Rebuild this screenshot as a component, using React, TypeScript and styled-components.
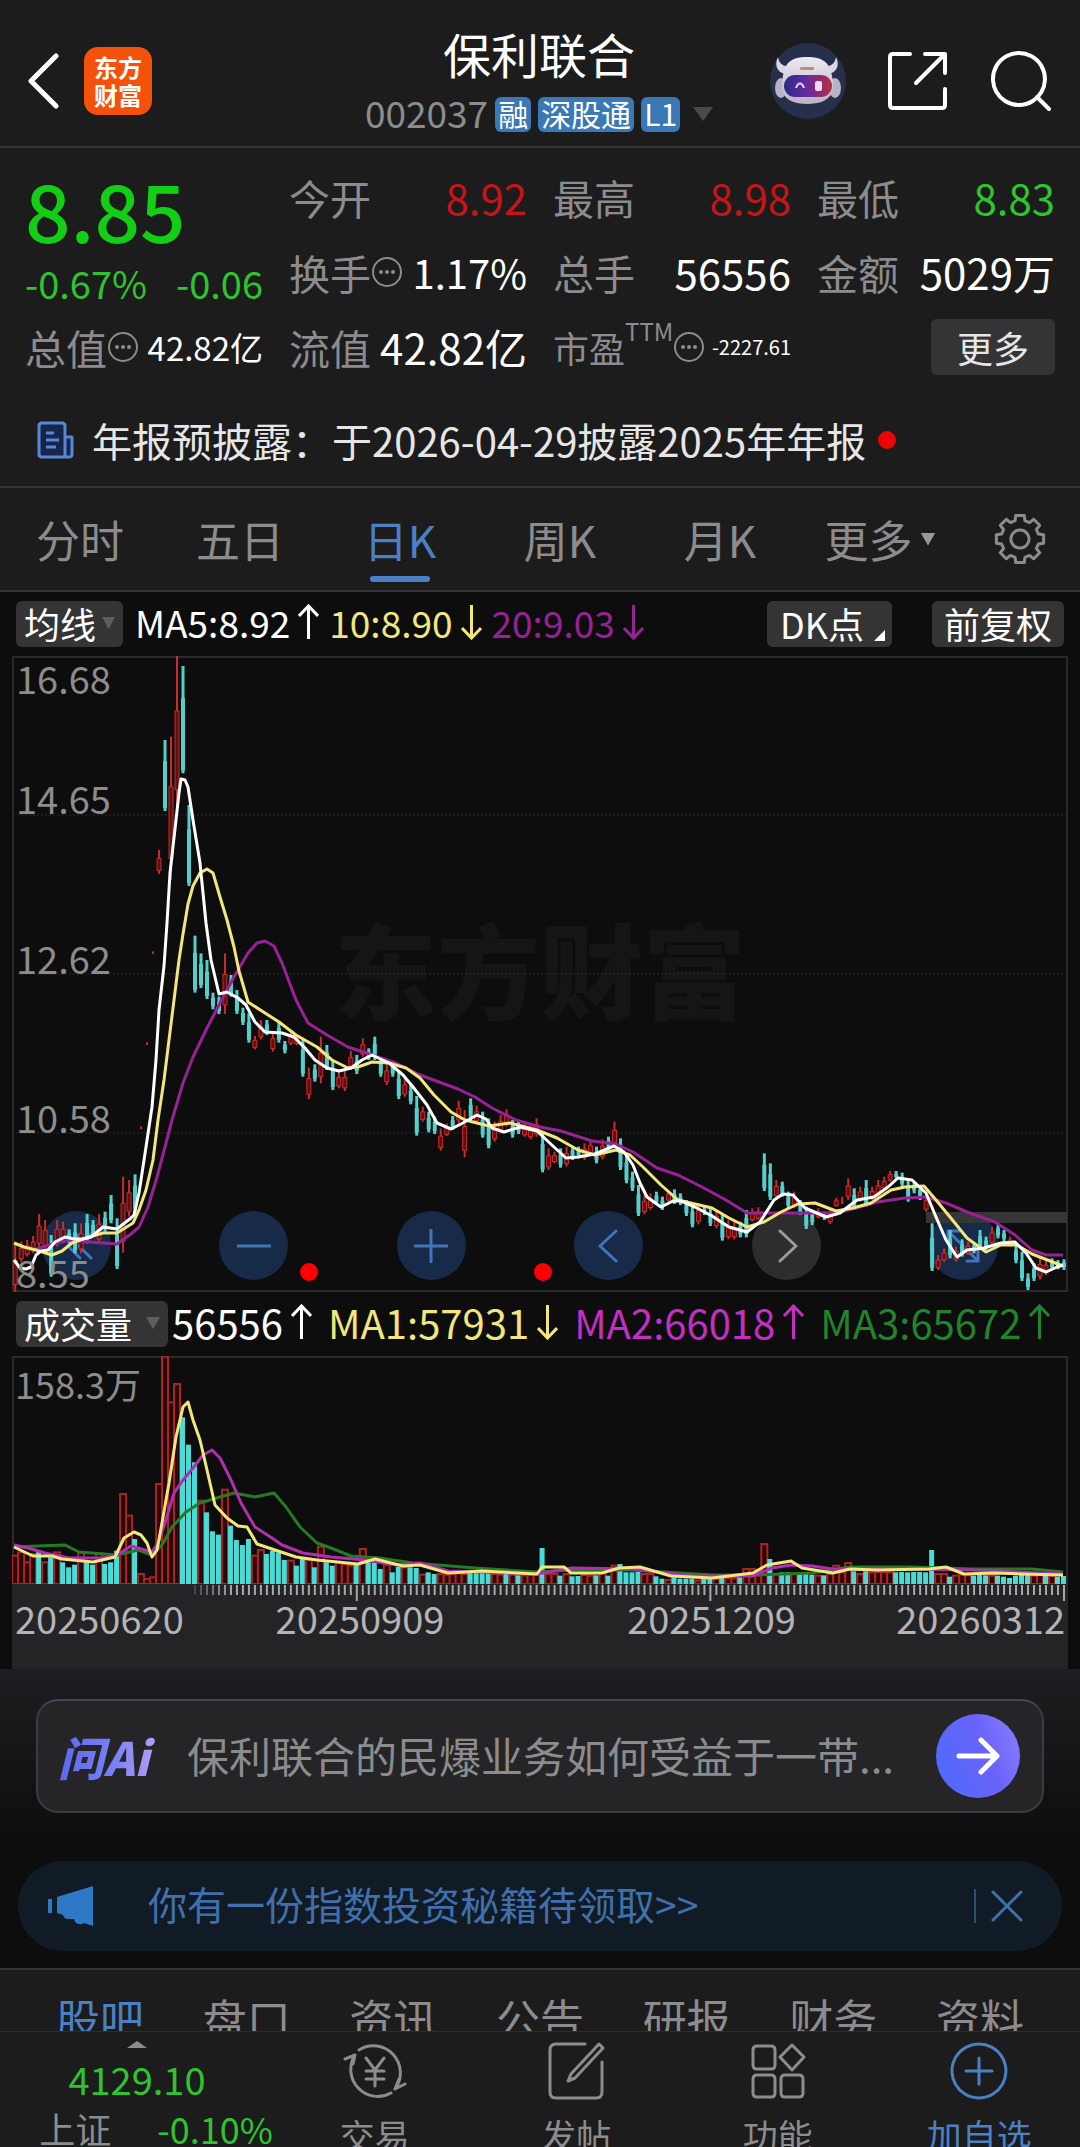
import React from "react";
import styled, { createGlobalStyle } from "styled-components";

const c = {
  panel: "#1c1c1c",
  black: "#0d0d0d",
  line: "#363636",
  grey: "#8c8c8e",
  light: "#e6e6e6",
  white: "#ffffff",
  blue: "#4a80c4",
  red: "#c4151b",
  green: "#2fc42f",
  vivid: "#12cf16",
  yellow: "#f3e67c",
  purple: "#962296",
  magenta: "#c22fc2",
  forest: "#23832a",
  cyan: "#54cfcb",
  chip: "#343434",
};

const Global = createGlobalStyle`
  *, *::before, *::after { box-sizing: border-box; }
  body { margin: 0; background: ${c.black}; }
  button { font: inherit; color: inherit; border: 0; padding: 0; background: none; cursor: pointer; }
  a { color: inherit; text-decoration: none; }
  svg { display: block; }
`;

const App_ = styled.div`
  display: flex;
  flex-direction: column;
  height: 100vh;
  overflow: hidden;
  background: ${c.black};
  color: ${c.white};
  font-family: "Noto Sans CJK SC", "Noto Sans", sans-serif;
`;

const Scroll = styled.main`
  flex: 1;
  min-height: 0;
  overflow: hidden;
`;

/* ---------- header ---------- */

const Header = styled.header`
  display: grid;
  grid-template-columns: 1fr auto 1fr;
  height: 148px;
  padding: 0 28px 0 26px;
  background: ${c.panel};
  border-bottom: 2px solid ${c.line};
`;

const HeaderSide = styled.div<{ $end?: boolean }>`
  display: flex;
  align-items: center;
  justify-content: ${(p) => (p.$end ? "flex-end" : "flex-start")};
  gap: ${(p) => (p.$end ? 42 : 24)}px;
  padding-top: 16px;
`;

const Logo = styled.div`
  display: grid;
  place-content: center;
  width: 68px;
  height: 68px;
  border-radius: 14px;
  background: #f4510d;
  font-size: 24px;
  font-weight: 700;
  line-height: 28px;
  text-align: center;
`;

const TitleBox = styled.div`
  display: flex;
  flex-direction: column;
  align-items: center;
  padding-top: 21px;
`;

const Title = styled.h1`
  margin: 0;
  font-size: 48px;
  font-weight: 400;
  line-height: 64px;
`;

const CodeRow = styled.div`
  display: flex;
  align-items: center;
  gap: 7px;
  height: 58px;
  color: ${c.grey};
  font-size: 37px;
  line-height: 54px;
  & > i { margin-left: 6px; }
  & > span:first-child { padding-bottom: 4px; }
`;

const Tag = styled.span`
  height: 35px;
  padding: 0 3px;
  border-radius: 6px;
  background: #3a78b6;
  color: ${c.white};
  font-size: 30px;
  line-height: 33px;
`;

const Caret = styled.i<{ $w: number; $h: number; $color?: string; $up?: boolean }>`
  display: inline-block;
  width: ${(p) => p.$w}px;
  height: ${(p) => p.$h}px;
  background: ${(p) => p.$color || "#5e5e5e"};
  clip-path: ${(p) => (p.$up ? "polygon(50% 0, 100% 100%, 0 100%)" : "polygon(0 0, 100% 0, 50% 100%)")};
`;

/* ---------- quote ---------- */

const Quote = styled.section`
  display: grid;
  grid-template-columns: repeat(4, 1fr);
  grid-auto-rows: 75px;
  column-gap: 26px;
  padding: 11px 25px 2px;
  background: ${c.panel};
`;

const PriceBlock = styled.div`
  grid-row: span 2;
  color: ${c.vivid};
`;

const Price = styled.div`
  font-size: 80px;
  font-weight: 500;
  line-height: 98px;
`;

const Change = styled.div`
  display: flex;
  justify-content: space-between;
  color: ${c.green};
  font-size: 38px;
  line-height: 52px;
  white-space: nowrap;
`;

const Cell = styled.div`
  display: flex;
  align-items: center;
  min-width: 0;
  white-space: nowrap;
`;

const Label = styled.span<{ $small?: boolean }>`
  display: flex;
  align-items: center;
  color: ${c.grey};
  font-size: ${(p) => (p.$small ? 36 : 41)}px;
  line-height: 60px;
`;

const Sup = styled.sup`
  align-self: flex-start;
  font-size: 24px;
  line-height: 28px;
`;

const Value = styled.span<{ $color?: string; $size?: number }>`
  margin-left: auto;
  color: ${(p) => p.$color || c.white};
  font-size: ${(p) => p.$size || 42}px;
  line-height: 60px;
`;

const MoreButton = styled.button`
  width: 124px;
  height: 56px;
  margin-left: auto;
  border-radius: 6px;
  background: ${c.chip};
  color: ${c.light};
  font-size: 36px;
  line-height: 54px;
`;

const Notice = styled.a`
  display: flex;
  align-items: center;
  height: 102px;
  padding: 8px 37px 0;
  background: ${c.panel};
  border-bottom: 2px solid ${c.line};
  color: ${c.light};
  font-size: 40px;
  line-height: 60px;
  white-space: nowrap;
`;

const NoticeText = styled.span`
  margin: 0 12px 0 17px;
`;

const Dot = styled.i`
  width: 18px;
  height: 18px;
  border-radius: 50%;
  background: #ec0505;
`;

/* ---------- period tabs ---------- */

const Periods = styled.nav`
  display: grid;
  grid-template-columns: repeat(6, 4fr) 3fr;
  align-items: center;
  justify-items: center;
  height: 104px;
  background: ${c.panel};
  border-bottom: 2px solid ${c.line};
  color: ${c.grey};
  font-size: 44px;
  line-height: 64px;
`;

const Period = styled.button<{ $on?: boolean }>`
  position: relative;
  display: flex;
  align-items: center;
  gap: 8px;
  height: 100%;
  white-space: nowrap;
  color: ${(p) => (p.$on ? c.blue : c.grey)};
  &::after {
    content: "";
    display: ${(p) => (p.$on ? "block" : "none")};
    position: absolute;
    left: calc(50% - 30px);
    bottom: 8px;
    width: 60px;
    height: 6px;
    border-radius: 3px;
    background: ${c.blue};
  }
`;

/* ---------- indicators ---------- */

const Indicators = styled.div<{ $size: number }>`
  display: flex;
  align-items: center;
  height: 64px;
  padding: 0 16px;
  font-size: ${(p) => p.$size}px;
  line-height: 54px;
  white-space: nowrap;
`;

const Chip = styled.button<{ $gap?: number; $pad?: number }>`
  display: flex;
  align-items: center;
  gap: ${(p) => p.$gap || 6}px;
  height: 46px;
  padding: 0 ${(p) => p.$pad || 8}px 2px;
  border-radius: 6px;
  background: ${c.chip};
  font-size: 36px;
  line-height: 44px;
`;

const Corner = styled.i`
  align-self: flex-end;
  width: 11px;
  height: 11px;
  margin: 0 -6px 4px 0;
  background: ${c.white};
  clip-path: polygon(100% 0, 100% 100%, 0 100%);
`;

const Reading = styled.span<{ $color: string; $left: number }>`
  display: flex;
  align-items: center;
  gap: 8px;
  margin-left: ${(p) => p.$left}px;
  padding-bottom: 4px;
  color: ${(p) => p.$color};
`;

const Right = styled.div`
  display: flex;
  gap: 40px;
  margin-left: auto;
`;

/* ---------- charts ---------- */

const ChartBox = styled.div`
  position: relative;
  margin: 0 12px;
  & > svg {
    position: relative;
    width: 100%;
    height: auto;
    pointer-events: none;
  }
`;

const Controls = styled.div`
  position: absolute;
  left: 30px;
  right: 70px;
  bottom: 12px;
  display: flex;
  justify-content: space-between;
`;

const Round = styled.button<{ $off?: boolean }>`
  display: grid;
  place-items: center;
  width: 69px;
  height: 69px;
  border-radius: 50%;
  background: ${(p) => (p.$off ? "#2d2d2d" : "#172b48")};
  color: ${(p) => (p.$off ? "#9a9a9a" : "#4374ba")};
`;

const Axis = styled.div`
  height: 85px;
  margin: 0 12px;
  background: #242426;
  & > svg { width: 100%; height: auto; }
`;

const Dates = styled.div`
  display: grid;
  grid-template-columns: 166fr 356fr 354fr 180fr;
  padding: 0 3px;
  color: #b4b4b6;
  font-size: 38px;
  line-height: 32px;
  text-align: center;
  white-space: nowrap;
  & > span:first-child { text-align: left; }
  & > span:last-child { text-align: right; }
`;

/* ---------- ask card & banner ---------- */

const AskArea = styled.section`
  padding: 30px 36px 48px;
  background: linear-gradient(#1e1e22, ${c.black} 90%);
`;

const Ask = styled.a`
  display: flex;
  align-items: center;
  height: 114px;
  padding: 0 22px 0 20px;
  border: 2px solid #3c3c44;
  border-top-color: #45435c;
  border-radius: 22px;
  background: #252527;
  color: ${c.grey};
  font-size: 42px;
  line-height: 60px;
  white-space: nowrap;
`;

const AskLogo = styled.span`
  width: 106px;
  background: linear-gradient(90deg, #5b67ee, #7b82f4 55%, #c3a4f5);
  background-clip: text;
  -webkit-background-clip: text;
  color: transparent;
  font-size: 46px;
  font-style: italic;
  font-weight: 900;
`;

const AskText = styled.span`
  flex: 1;
  margin-left: 23px;
  padding-bottom: 2px;
`;

const Go = styled.span`
  display: grid;
  place-items: center;
  width: 84px;
  height: 84px;
  border-radius: 50%;
  background: linear-gradient(70deg, #4a6cfa, #6a63fb 60%, #8d80fa);
`;

const Banner = styled.div`
  display: flex;
  align-items: center;
  height: 90px;
  margin: 0 18px 17px;
  padding: 0 38px 0 30px;
  border-radius: 45px;
  background: #111b25;
  color: #3f70ac;
  font-size: 39px;
  line-height: 56px;
`;

const BannerLink = styled.a`
  flex: 1;
  margin-left: 54px;
  padding-bottom: 6px;
`;

const Close = styled.button`
  padding-left: 14px;
  border-left: 2px solid #2c5076;
`;

/* ---------- bottom ---------- */

const Sections = styled.nav`
  display: flex;
  justify-content: space-between;
  height: 100px;
  padding: 16px 56px 0;
  background: ${c.panel};
  border-top: 2px solid ${c.line};
  font-size: 44px;
  line-height: 64px;
`;

const SectionTab = styled.button<{ $on?: boolean }>`
  align-self: flex-start;
  color: ${(p) => (p.$on ? c.blue : c.grey)};
`;

const Footer = styled.footer`
  flex: none;
  display: grid;
  grid-template-columns: 274px repeat(4, 1fr);
  height: 116px;
  overflow: hidden;
  background: ${c.panel};
  border-top: 1px solid #2c2c2c;
`;

const Index = styled.div`
  display: flex;
  flex-direction: column;
  align-items: center;
  padding-top: 9px;
  color: ${c.green};
  font-size: 38px;
  line-height: 50px;
  & > i { flex: none; }
`;

const IndexValue = styled.span`
  margin-top: 6px;
`;

const IndexRow = styled.div`
  display: flex;
  gap: 46px;
  margin-left: 38px;
  font-size: 36px;
  line-height: 48px;
  white-space: nowrap;
  & > span:first-child { color: ${c.grey}; }
`;

const Action = styled.button<{ $on?: boolean }>`
  display: flex;
  flex-direction: column;
  align-items: center;
  gap: 10px;
  height: 160px;
  padding-top: 10px;
  color: ${(p) => (p.$on ? c.blue : c.grey)};
  font-size: 35px;
  line-height: 50px;
`;

/* ---------- data ---------- */

type Day = { x: number; up: boolean; top: number; bottom: number };

const PITCH = 5.993;
const xOf = (i: number) => 3.2 + PITCH * i;

/* Each day is r(ise) or c(fall) with the high and low, in thirds of a chart unit from the base. */
const parse = (start: number, base: number, text: string): Day[] =>
  text
    .trim()
    .split(/\s+/)
    .map((t, k) => {
      const [a, b] = t.slice(1).split("/").map(Number);
      return { x: xOf(start + k), up: t[0] === "r", top: base + a / 3, bottom: base + b / 3 };
    });

const days: Day[] = [
  ...parse(
    0,
    304,
    `r850/995 r845/905 r840/890 r828/880 r762/865 r780/870 c825/950 r780/860 r785/850 c808/850
     c790/880 r790/880 c762/850 c780/830 r762/850 c755/815 c705/790 c775/927 r650/878 r660/770
     c643/755 r499/507 r247/255 r-26/-18 r-330/-258 c-660/-447 r-670/-240 r-913/-440 c-882/-560 c-465/-222
     c-73/98 c-20/84 c0/117 c98/148 c110/162 r-20/162 c45/110 c90/162 c143/195 c160/248
     r228/268 r180/238 c180/225 r215/275 c185/248 c243/280 r215/255 r225/255 c235/350 r323/417
     c313/365 r230/370 c255/330 c300/390 r335/385 r330/393 r273/330 c285/342 r235/290 c265/300
     c230/300 c295/350 r310/375 c305/350 c330/417 r355/410 c375/433 c408/527 r440/485 c455/517
     c470/522 r505/572 r490/528 c468/510 r422/490 r450/592 c415/480 r437/490 c455/533 c475/565
     r485/545 r465/520 r448/500 c480/533 c485/522 r490/530 r490/537 r475/530`
  ),
  ...parse(
    88,
    344,
    `c395/517 r445/510 r455/490 c445/503 r440/500 c440/480 c440/475 r430/480 r422/465 c440/490
     r418/478 c410/450 r365/440 c415/510 c460/550 c515/573 c555/648 r585/643 r580/630 c575/615
     c590/630 r570/605 c568/612 c580/615 c600/648 c615/682 r610/673 c620/645 c625/678 r630/685
     c645/722 r660/718 r665/718 c665/712 c630/712 r625/665 r622/660 c460/573 c490/600 r540/595
     c545/590 c575/625 r575/625 c600/645 c620/687 c630/675 r625/655 c635/660 r625/672 r593/620
     r590/612 r535/600 c565/630 r560/605 c540/620 r560/600 r540/590 r530/570 r513/545 c513/540
     c518/560 c535/605 c545/580 c555/600 r585/635 c670/813 r765/810 r745/785 c690/775 r740/785
     c718/770 r725/765 c730/760 c690/750 c710/750 r680/735 c672/715 c690/725 r710/740 c735/790
     c755/843 c820/870 c790/843 r770/838 r780/825 c775/810 c780/808 c778/810`
  ),
];

/* Volume per day, as bar height in thirds of a chart unit. */
const volumes = `r85 r95 r65 r90 c100 r65 c80 r95 c65 c50 c58 r95 c65 c58 r92 c60 c65 c100 r270 r205
  c135 r30 r15 r20 r300 r682 r545 r600 c500 c418 c365 r250 c215 c158 c148 r283 c175 c132 c117 c135
  r85 r102 c90 c100 c95 c72 r70 c55 c80 r72 c50 r112 c65 c55 r65 r60 r55 c60 r105 c65
  c65 c45 r58 c35 c52 r50 c50 c48 r28 c35 c30 r30 r28 r30 r32 r30 c35 c35 c35 c35
  r30 r28 c30 r28 c26 r26 r27 r28 c108 r30 r30 c25 r30 c23 c24 r27 r25 c26 r45 c25
  r55 c60 c35 c35 c36 r30 r30 c23 c16 r12 c20 c16 c16 c16 r10 c18 c18 r15 c18 r18
  r18 c20 r45 r45 r25 r120 c75 r30 c35 c35 r30 c30 c30 c28 r25 c26 r30 r55 r35 r63
  c38 r30 c38 r35 r36 r35 r35 c35 c36 c35 c36 c36 c35 c102 r30 r30 c22 r25 r28 r26
  c25 c27 c26 r25 c25 c22 c18 c25 c28 c28 r25 r26 c27 r24 c22 c24`
  .trim()
  .split(/\s+/)
  .map((t, i) => ({ x: xOf(i), up: t[0] === "r", h: Number(t.slice(1)) / 3 }));

const ma5 =
  "2,604 8,612 14,613 19,611 24,599 29,595 36,594 43,586 53,581 62,583 70,583 79,581 91,571 105,573 119,562 122,559 127,537 134,491 140,451 144,404 147,354 152,310 155,267 158,217 164,164 167,137 169,123 173,124 176,131 181,164 188,207 194,267 199,304 207,338 215,336 226,342 234,349 243,366 253,376 270,377 282,381 293,392 303,404 315,412 327,415 339,412 350,404 360,399 377,407 391,419 401,431 415,449 425,467 439,473 449,468 465,459 474,463 480,472 492,476 508,471 525,475 542,491 554,502 566,501 583,498 602,490 612,496 621,509 628,527 635,541 649,551 661,545 669,545 683,551 700,560 717,571 735,576 748,566 762,544 771,538 781,539 793,552 814,561 828,557 845,544 862,541 876,531 886,522 900,524 914,537 924,561 934,584 945,601 955,594 972,592 989,587 1003,586 1014,597 1024,612 1034,616 1045,611 1051,609";
const ma10 =
  "2,587 12,591 24,594 40,599 50,595 60,587 74,582 91,577 105,577 121,567 127,554 134,534 141,504 146,464 152,424 157,384 162,344 167,304 171,278 176,248 181,230 188,217 195,213 201,217 208,241 215,264 222,291 227,315 236,346 253,357 267,366 284,379 305,391 320,404 336,412 346,411 360,406 377,407 394,412 408,422 422,439 439,456 453,464 477,470 498,467 525,474 545,482 566,494 583,499 604,494 618,499 631,511 649,529 666,544 683,548 700,552 717,562 735,571 752,566 769,556 786,548 803,547 824,555 841,552 859,547 879,534 893,531 912,530 924,544 938,561 955,582 974,596 989,589 1005,589 1020,598 1051,610";
const ma20 =
  "22,594 33,590 57,584 78,586 105,588 119,578 127,571 136,551 145,521 153,491 160,464 171,427 181,401 195,372 208,347 222,321 236,297 245,287 253,285 262,290 270,307 284,344 296,367 315,379 336,391 360,399 384,407 408,419 446,433 463,441 480,452 504,464 528,471 549,475 580,485 604,488 621,496 645,512 666,519 690,531 714,544 735,557 755,557 793,557 824,557 848,551 865,546 893,542 914,541 934,547 955,556 983,566 1003,579 1020,594 1034,599 1051,599";
const vol5 =
  "2,191 21,200 40,200 50,203 81,206 103,201 112,182 122,176 129,179 135,187 140,201 145,194 150,167 157,127 164,81 171,51 176,46 181,64 188,84 195,114 203,149 215,162 226,170 235,171 245,188 263,194 284,201 305,204 346,208 363,203 391,210 408,209 436,217 470,215 525,218 530,211 552,211 559,217 590,217 607,212 628,211 659,220 700,222 741,217 755,209 779,205 790,212 821,217 838,213 865,214 917,213 934,211 952,218 983,217 1010,218 1051,219";
const vol10 =
  "2,189 16,192 33,197 57,202 91,202 105,199 119,190 140,196 146,187 153,167 162,137 171,124 181,112 191,99 200,94 208,102 219,124 229,147 243,171 260,182 270,189 291,197 319,201 353,204 384,209 408,207 436,215 525,218 560,212 620,213 680,220 740,220 760,212 779,209 800,210 820,213 900,213 960,214 1051,218";
const vol20 =
  "2,191 26,190 53,189 67,196 105,199 126,194 140,199 150,189 160,171 174,156 188,147 208,141 222,137 243,141 262,137 274,151 288,171 305,187 319,192 339,200 367,202 401,207 463,212 525,216 560,214 620,214 700,219 740,219 800,217 838,211 900,211 960,213 1020,213 1051,216";

/* ---------- drawings ---------- */

const Stroke = ({ w, h = w, d, sw = 3, vb }: { w: number; h?: number; d: string; sw?: number; vb?: string }) => (
  <svg width={w} height={h} viewBox={vb || `0 0 ${w} ${h}`} fill="none" stroke="currentColor" strokeWidth={sw} strokeLinecap="round" strokeLinejoin="round">
    <path d={d} />
  </svg>
);

const Arrow = ({ down }: { down?: boolean }) => (
  <svg width="21" height="36" viewBox="0 0 21 36" fill="none" stroke="currentColor" strokeWidth="3" role="img" aria-label={down ? "down" : "up"}>
    <path d={down ? "M10.5 1V34M1 24L10.5 34L20 24" : "M10.5 35V2M1 12L10.5 2L20 12"} />
  </svg>
);

const More = () => (
  <svg width="32" height="32" viewBox="0 0 32 32" fill="none" stroke={c.grey} strokeWidth="2">
    <circle cx="16" cy="16" r="14" />
    <g fill={c.grey} stroke="none">
      <circle cx="10" cy="16" r="2" />
      <circle cx="16" cy="16" r="2" />
      <circle cx="22" cy="16" r="2" />
    </g>
  </svg>
);

const Robot = () => (
  <svg width="76" height="76" viewBox="0 0 76 76">
    <defs>
      <linearGradient id="visor">
        <stop offset="0" stopColor="#2b2a8c" />
        <stop offset=".5" stopColor="#6a2a9c" />
        <stop offset="1" stopColor="#b5303f" />
      </linearGradient>
      <linearGradient id="shell" x2="0" y2="1">
        <stop offset="0" stopColor="#eceaf0" />
        <stop offset="1" stopColor="#b9b2c4" />
      </linearGradient>
    </defs>
    <circle cx="38" cy="38" r="38" fill="#26304a" />
    <path d="M8 14C4 22 7 29 15 31L21 22C13 25 9 20 8 14ZM66 14C70 22 67 29 59 31L53 22C61 25 65 20 66 14Z" fill="#d9d7e2" />
    <ellipse cx="11" cy="45" rx="6" ry="10" fill="#b8b3c6" />
    <ellipse cx="65" cy="45" rx="6" ry="10" fill="#b8b3c6" />
    <path d="M37 14C52 14 60 19 62 33C65 46 64 61 37 61C12 61 10 47 13 33C15 19 22 14 37 14Z" fill="url(#shell)" />
    <rect x="14" y="32" width="48" height="22" rx="11" fill="url(#visor)" />
    <path d="M26 45C28 39 32 39 34 45" fill="none" stroke="#d9d7ff" strokeWidth="2" />
    <rect x="45" y="38" width="7" height="10" rx="2" fill="#eadcf0" />
    <rect x="30" y="24" width="14" height="3" rx="1" fill="#b98d80" />
  </svg>
);

const gear = (() => {
  const pts: string[] = [];
  for (let k = 0; k < 8; k++) {
    const a = (k * Math.PI) / 4 - Math.PI / 2;
    [
      [-0.26, 19],
      [-0.18, 24],
      [0.18, 24],
      [0.26, 19],
    ].forEach(([da, r]) => pts.push(`${(26 + r * Math.cos(a + da)).toFixed(1)} ${(26 + r * Math.sin(a + da)).toFixed(1)}`));
  }
  return `M${pts.join("L")}Z`;
})();

const Line = ({ points, color, w = 3 }: { points: string; color: string; w?: number }) => (
  <polyline points={points} fill="none" stroke={color} strokeWidth={w} strokeLinejoin="round" />
);

const PriceChart = () => (
  <svg viewBox="0 0 1056 636" fontSize="38" fill={c.grey} role="img" aria-label="日K">
    <text x="528" y="356" fontSize="103" fontWeight="900" fill="#151515" textAnchor="middle">东方财富</text>
    <rect x="1" y="1" width="1054" height="634" fill="none" stroke="#2a2a2a" strokeWidth="2" />
    {[159, 318, 477].map((y) => (
      <path key={y} d={`M1 ${y}H1055`} stroke="#2c2c2c" strokeDasharray="2 2" />
    ))}
    <rect x="914" y="556" width="141" height="11" fill="#363636" />
    {days.map((d, i) => (
      <g key={i} stroke={d.up ? "#cc2a2c" : c.cyan}>
        <path d={`M${d.x} ${d.top}V${d.bottom}`} strokeWidth={d.up ? 2 : 3} />
        {d.up && d.bottom - d.top > 8 && (
          <rect x={d.x - 2} y={d.top + (d.bottom - d.top) * 0.35} width="4" height={(d.bottom - d.top) * 0.5} fill="#5a1214" strokeWidth="1" />
        )}
        {!d.up && <path d={`M${d.x} ${d.top + (d.bottom - d.top) * 0.3}V${d.bottom - 3}`} strokeWidth="4" />}
      </g>
    ))}
    <Line points={ma20} color={c.purple} />
    <Line points={ma10} color={c.yellow} />
    <Line points={ma5} color={c.white} />
    <text x="4" y="38">16.68</text>
    <text x="4" y="158">14.65</text>
    <text x="4" y="318">12.62</text>
    <text x="4" y="477">10.58</text>
    <text x="4" y="632">8.55</text>
    <circle cx="297" cy="616" r="9" fill="#f00" />
    <circle cx="531" cy="616" r="9" fill="#f00" />
  </svg>
);

const VolumeChart = () => (
  <svg viewBox="0 0 1056 228" fontSize="36" fill={c.grey} role="img" aria-label="成交量">
    <rect x="1" y="1" width="1054" height="227" fill="none" stroke="#2a2a2a" strokeWidth="2" />
    {volumes.map((v, i) =>
      v.up ? (
        <rect key={i} x={v.x - 3} y={228 - v.h} width="6" height={v.h} fill="#2a0808" stroke="#ab2426" strokeWidth="2" />
      ) : (
        <rect key={i} x={v.x - 3} y={228 - v.h} width="5" height={v.h} fill="#49dcd6" />
      )
    )}
    <Line points={vol20} color="#257a25" />
    <Line points={vol10} color="#b02fb0" />
    <Line points={vol5} color={c.yellow} />
    <text x="3" y="43">158.3万</text>
  </svg>
);

const Ticks = () => (
  <svg viewBox="0 0 1056 18" stroke="#a8a8a8" strokeWidth="2">
    {Array.from({ length: 146 }, (_, k) => {
      const i = k + 30;
      const major = i === 57 || i === 116 || i === 175;
      return <path key={i} opacity={Math.min(1, (k + 2) / 8)} d={`M${xOf(i)} 1V${major ? 17 : 11}`} />;
    })}
  </svg>
);

/* ---------- page ---------- */

export default function App() {
  return (
    <App_>
      <Global />
      <Scroll>
        <Header>
          <HeaderSide>
            <button aria-label="返回">
              <Stroke w={34} h={56} sw={5} d="M30 3L5 28L30 53" />
            </button>
            <Logo>东方<br />财富</Logo>
          </HeaderSide>
          <TitleBox>
            <Title>保利联合</Title>
            <CodeRow>
              <span>002037</span>
              <Tag>融</Tag>
              <Tag>深股通</Tag>
              <Tag>L1</Tag>
              <Caret $w={20} $h={14} $color="#4a4a4a" />
            </CodeRow>
          </TitleBox>
          <HeaderSide $end>
            <button aria-label="助手"><Robot /></button>
            <button aria-label="分享">
              <Stroke w={60} sw={4} d="M22 3H5Q2 3 2 6V54Q2 57 5 57H54Q57 57 57 54V38M37 3H57V22M56 4L28 32" />
            </button>
            <button aria-label="搜索">
              <Stroke w={62} sw={4} d="M29 3A26 26 0 1 1 28.900 3ZM47 47L59 59" />
            </button>
          </HeaderSide>
        </Header>

        <Quote>
          <PriceBlock>
            <Price>8.85</Price>
            <Change><span>-0.67%</span><span>-0.06</span></Change>
          </PriceBlock>
          <Cell><Label>今开</Label><Value $color={c.red}>8.92</Value></Cell>
          <Cell><Label>最高</Label><Value $color={c.red}>8.98</Value></Cell>
          <Cell><Label>最低</Label><Value $color={c.green}>8.83</Value></Cell>
          <Cell><Label>换手<More /></Label><Value $size={40}>1.17%</Value></Cell>
          <Cell><Label>总手</Label><Value>56556</Value></Cell>
          <Cell><Label>金额</Label><Value>5029万</Value></Cell>
          <Cell><Label>总值<More /></Label><Value $size={33}>42.82亿</Value></Cell>
          <Cell><Label>流值</Label><Value>42.82亿</Value></Cell>
          <Cell><Label $small>市盈<Sup>TTM</Sup><More /></Label><Value $size={20}>-2227.61</Value></Cell>
          <Cell><MoreButton>更多</MoreButton></Cell>
        </Quote>

        <Notice href="#notice">
          <svg width="38" height="38" viewBox="0 0 38 38" fill="#16264a" stroke="#5a86d6" strokeWidth="3" strokeLinejoin="round">
            <path d="M28 36H5Q2 36 2 33V5Q2 2 5 2H25Q28 2 28 5V36ZM28 16H35V33Q35 36 32 36H28" />
            <path d="M9 12H17M9 19H22M9 26H19" />
          </svg>
          <NoticeText>年报预披露：于2026-04-29披露2025年年报</NoticeText>
          <Dot />
        </Notice>

        <Periods>
          <Period>分时</Period>
          <Period>五日</Period>
          <Period $on>日K</Period>
          <Period>周K</Period>
          <Period>月K</Period>
          <Period>更多<Caret $w={15} $h={13} $color="#98989a" /></Period>
          <button aria-label="设置">
            <Stroke w={52} sw={3} d={`${gear}M26 17A9 9 0 1 1 25.900 17Z`} />
          </button>
        </Periods>

        <Indicators $size={37}>
          <Chip>均线<Caret $w={13} $h={12} /></Chip>
          <Reading $color={c.white} $left={12}>MA5:8.92<Arrow /></Reading>
          <Reading $color={c.yellow} $left={10}>10:8.90<Arrow down /></Reading>
          <Reading $color={c.purple} $left={10}>20:9.03<Arrow down /></Reading>
          <Right>
            <Chip $pad={13} $gap={10}>DK点<Corner /></Chip>
            <Chip $pad={12}>前复权</Chip>
          </Right>
        </Indicators>

        <ChartBox>
          <Controls>
            <Round aria-label="最早"><Stroke w={34} d="M20 5L8 17L20 29M31 5L19 17L31 29" /></Round>
            <Round aria-label="缩小"><Stroke w={34} d="M1 17H33" /></Round>
            <Round aria-label="放大"><Stroke w={34} d="M1 17H33M17 1V33" /></Round>
            <Round aria-label="向左"><Stroke w={34} d="M24 2L8 17L24 32" /></Round>
            <Round aria-label="向右" $off><Stroke w={34} d="M11 2L27 17L11 32" /></Round>
            <Round aria-label="全屏"><Stroke w={34} d="M2 13V2H13M2 2L14 14M32 21V32H21M32 32L20 20" /></Round>
          </Controls>
          <PriceChart />
        </ChartBox>

        <Indicators $size={40}>
          <Chip $gap={14}>成交量<Caret $w={14} $h={12} /></Chip>
          <Reading $color={c.white} $left={4}>56556<Arrow /></Reading>
          <Reading $color={c.yellow} $left={16}>MA1:57931<Arrow down /></Reading>
          <Reading $color={c.magenta} $left={16}>MA2:66018<Arrow /></Reading>
          <Reading $color={c.forest} $left={16}>MA3:65672<Arrow /></Reading>
        </Indicators>

        <ChartBox><VolumeChart /></ChartBox>
        <Axis>
          <Ticks />
          <Dates>
            <span>20250620</span>
            <span>20250909</span>
            <span>20251209</span>
            <span>20260312</span>
          </Dates>
        </Axis>

        <AskArea>
          <Ask href="#ask">
            <AskLogo>问Ai</AskLogo>
            <AskText>保利联合的民爆业务如何受益于一带...</AskText>
            <Go>
              <svg width="44" height="38" viewBox="0 0 44 38" fill="none" stroke="#fff" strokeWidth="5" strokeLinecap="round" strokeLinejoin="round">
                <path d="M3 19H41M25 3L41 19L25 35" />
              </svg>
            </Go>
          </Ask>
        </AskArea>

        <Banner>
          <svg width="46" height="40" viewBox="0 0 46 40" fill="#2f78c6">
            <path d="M0 13H4V27H0ZM9 11L45 0V40L36 37Q32 40 27 36L26 33L20 33Q16 33 15 29L9 27Z" />
          </svg>
          <BannerLink href="#gift">你有一份指数投资秘籍待领取&gt;&gt;</BannerLink>
          <Close aria-label="关闭"><Stroke w={34} d="M3 3L31 31M31 3L3 31" /></Close>
        </Banner>

        <Sections>
          {["股吧", "盘口", "资讯", "公告", "研报", "财务", "资料"].map((t, i) => (
            <SectionTab key={t} $on={i === 0}>{t}</SectionTab>
          ))}
        </Sections>
      </Scroll>

      <Footer>
        <Index>
          <Caret $w={20} $h={7} $color={c.grey} $up />
          <IndexValue>4129.10</IndexValue>
          <IndexRow><span>上证</span><span>-0.10%</span></IndexRow>
        </Index>
        <Action>
          <Stroke w={64} h={58} d="M16 8A27 27 0 0 1 52 47M56 37L52 47L62 42M48 51A27 27 0 0 1 12 13M2 17L12 13L10 22M23 16L32 28L41 16M32 28V44M23 29H41M23 37H41" />
          交易
        </Action>
        <Action>
          <Stroke w={58} d="M38 2H9Q3 2 3 8V50Q3 56 9 56H49Q55 56 55 50V20M52 2L56 6L28 36L21 39L24 32Z" />
          发帖
        </Action>
        <Action>
          <Stroke w={58} d="M8 4H22Q26 4 26 8V23Q26 27 22 27H8Q4 27 4 23V8Q4 4 8 4ZM43 3L55 15L43 28L31 15ZM8 33H22Q26 33 26 37V51Q26 55 22 55H8Q4 55 4 51V37Q4 33 8 33ZM36 33H50Q54 33 54 37V51Q54 55 50 55H36Q32 55 32 51V37Q32 33 36 33Z" />
          功能
        </Action>
        <Action $on>
          <Stroke w={58} d="M29 2A27 27 0 1 1 28.900 2ZM29 16V42M16 29H42" />
          加自选
        </Action>
      </Footer>
    </App_>
  );
}
